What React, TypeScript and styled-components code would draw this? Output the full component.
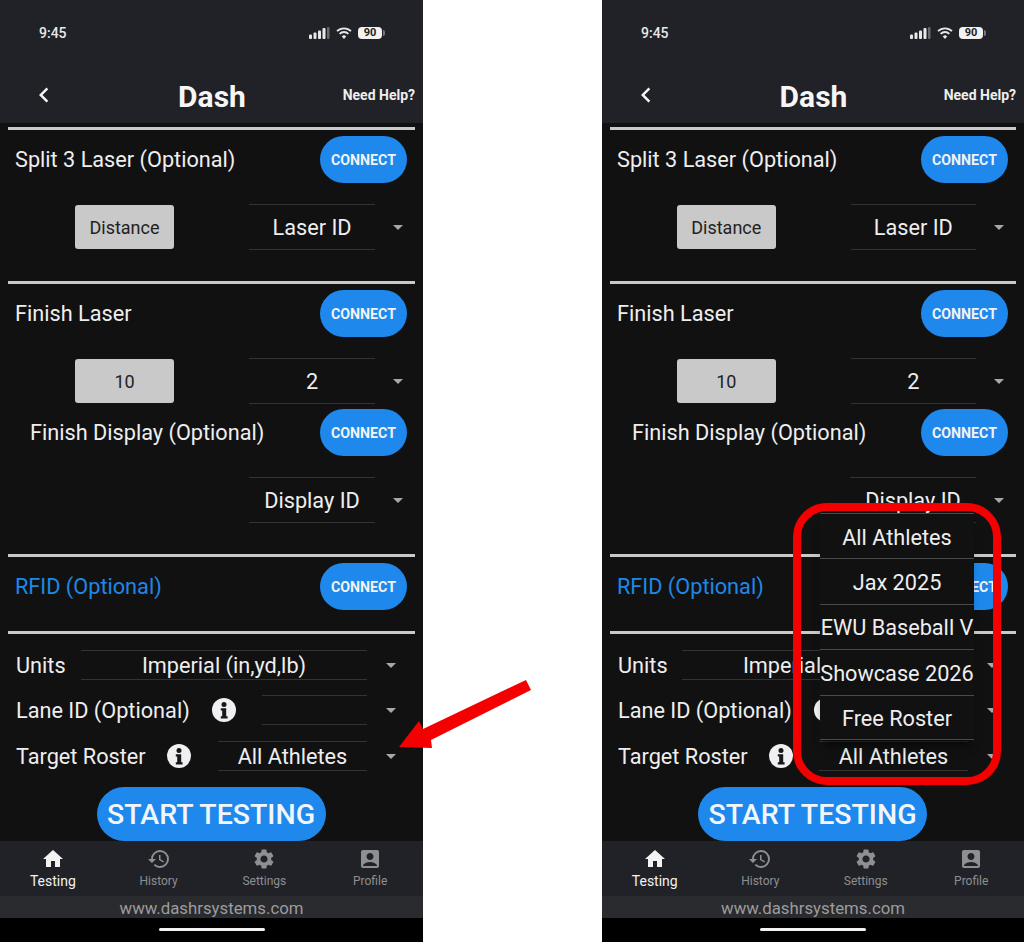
import React from "react";
import styled, { createGlobalStyle } from "styled-components";
import { MdAccountBox, MdChevronLeft, MdHistory, MdHome, MdSettings } from "react-icons/md";

const Global = createGlobalStyle`
  html, body { margin: 0; padding: 0; background: #fff; }
  * { box-sizing: border-box; }
  body { font-family: Roboto, "Liberation Sans", sans-serif; }
`;

const Page = styled.div`
  position: relative;
  width: 1024px;
  height: 942px;
  display: flex;
  justify-content: space-between;
  background: #fff;
  overflow: hidden;
`;

const Phone = styled.div<{ $width: number }>`
  position: relative;
  width: ${(p) => p.$width}px;
  height: 942px;
  display: flex;
  flex-direction: column;
  background: #111112;
  color: #eee;
  overflow: hidden;
`;

const Top = styled.header`
  height: 123px;
  background: #212227;
  display: flex;
  flex-direction: column;
`;

const StatusBar = styled.div`
  height: 66px;
  padding: 24px 41px 0 39px;
  display: flex;
  align-items: flex-start;
  justify-content: space-between;
`;

const Clock = styled.span`
  font-size: 14px;
  font-weight: 500;
  line-height: 18px;
  color: #e8e8e8;
`;

const StatusIcons = styled.div`
  display: flex;
  align-items: center;
  height: 18px;
  gap: 6px;
`;

const Battery = styled.div`
  position: relative;
  width: 24px;
  height: 12px;
  border-radius: 4px;
  background: #f2f2f2;
  color: #222;
  font-size: 11px;
  font-weight: 700;
  line-height: 12px;
  text-align: center;
  &::after {
    content: "";
    position: absolute;
    right: -3px;
    top: 3px;
    width: 2px;
    height: 6px;
    border-radius: 0 2px 2px 0;
    background: #777;
  }
`;

const TitleBar = styled.div`
  display: grid;
  grid-template-columns: 1fr auto 1fr;
  align-items: center;
  height: 57px;
  padding: 0 8px 0 29px;
`;

const Back = styled.div`
  display: flex;
  color: #f4f4f4;
`;

const Title = styled.h1`
  margin: 0;
  padding-top: 4px;
  font-size: 30px;
  font-weight: 700;
  color: #f6f6f6;
  transform: translateX(-10px);
`;

const Help = styled.div`
  font-size: 14px;
  font-weight: 700;
  color: #eee;
  text-align: right;
  white-space: nowrap;
`;

const Content = styled.main`
  flex: 1;
  padding: 0 8px;
  display: flex;
  flex-direction: column;
`;

const Divider = styled.div<{ $top: number }>`
  height: 3px;
  margin-top: ${(p) => p.$top}px;
  background: #c9c9c9;
`;

const TitleRow = styled.div<{ $top: number; $indent: number }>`
  display: flex;
  align-items: center;
  justify-content: space-between;
  height: 47px;
  margin-top: ${(p) => p.$top}px;
  padding-left: ${(p) => p.$indent}px;
  padding-right: 8px;
`;

const SectionLabel = styled.span<{ $accent?: boolean }>`
  font-size: 21.7px;
  color: ${(p) => (p.$accent ? "#1e88e5" : "#eeeeee")};
`;

const Connect = styled.button`
  width: 87px;
  height: 47px;
  border: 0;
  padding: 0;
  border-radius: 24px;
  background: #1e88ed;
  color: #f2f2f2;
  font-family: inherit;
  font-size: 14.2px;
  font-weight: 700;
`;

const ControlRow = styled.div<{ $top: number }>`
  display: flex;
  align-items: center;
  height: 46px;
  margin-top: ${(p) => p.$top}px;
`;

const ValueButton = styled.div`
  width: 99px;
  height: 44px;
  margin-left: 67px;
  padding-top: 1px;
  border-radius: 3px;
  background: #c9c9c9;
  color: #222;
  font-size: 18px;
  display: flex;
  align-items: center;
  justify-content: center;
`;

const Field = styled.div<{ $width: number; $left?: number }>`
  width: ${(p) => p.$width}px;
  height: 100%;
  margin-left: ${(p) => (p.$left === undefined ? "auto" : `${p.$left}px`)};
  padding-top: 1px;
  border-top: 1.5px solid #333336;
  border-bottom: 1.5px solid #333336;
  display: flex;
  align-items: center;
  justify-content: center;
  font-size: 21.7px;
  color: #eeeeee;
  white-space: nowrap;
`;

const Caret = styled.span<{ $left: number; $right: number }>`
  width: 0;
  height: 0;
  margin-left: ${(p) => p.$left}px;
  margin-right: ${(p) => p.$right}px;
  border-left: 5px solid transparent;
  border-right: 5px solid transparent;
  border-top: 5px solid #a8a8a8;
`;

const SettingRow = styled.div<{ $top: number }>`
  display: flex;
  align-items: center;
  height: 30px;
  margin-top: ${(p) => p.$top}px;
  padding-left: 8px;
`;

const SettingLabel = styled.span`
  padding-top: 1px;
  font-size: 21.7px;
  color: #eeeeee;
  white-space: nowrap;
`;

const Info = styled.svg<{ $left: number }>`
  flex: none;
  margin-left: ${(p) => p.$left}px;
`;

const Start = styled.button`
  align-self: center;
  width: 229px;
  height: 54px;
  margin-top: 16px;
  margin-right: 1px;
  border: 0;
  padding: 0;
  border-radius: 27px;
  background: #1e88ed;
  color: #f2f6fa;
  font-family: inherit;
  font-size: 28.5px;
  font-weight: 500;
`;

const Nav = styled.nav`
  height: 56px;
  display: grid;
  grid-template-columns: repeat(4, 1fr);
  background: #212227;
`;

const NavItem = styled.div<{ $active?: boolean }>`
  display: flex;
  flex-direction: column;
  align-items: center;
  padding-top: 6px;
  color: ${(p) => (p.$active ? "#f2f2f2" : "#8e8f92")};
  font-size: ${(p) => (p.$active ? 14 : 12)}px;
  font-weight: 400;
  line-height: 16px;
  gap: 2px;
`;

const Site = styled.div`
  height: 22px;
  background: #2a2b2e;
  color: #9c9c9e;
  font-size: 16.8px;
  line-height: 25px;
  text-align: center;
`;

const HomeArea = styled.div`
  height: 24px;
  background: #000;
  display: flex;
  justify-content: center;
  padding-top: 10px;
`;

const HomeBar = styled.div`
  width: 106px;
  height: 3px;
  border-radius: 2px;
  background: #f2f2f2;
`;

const Dropdown = styled.ul`
  position: absolute;
  left: 218px;
  top: 513px;
  width: 154px;
  margin: 0;
  padding: 0;
  list-style: none;
  background: #111112;
  box-shadow: 0 10px 8px -4px rgba(0, 0, 0, 0.5);
`;

const Option = styled.li`
  height: 45.4px;
  padding-top: 2px;
  border-top: 1.5px solid #4a4a4c;
  display: flex;
  align-items: center;
  justify-content: center;
  font-size: 21.7px;
  color: #eeeeee;
  white-space: nowrap;
  &:last-child {
    border-bottom: 1.5px solid #4a4a4c;
  }
`;

const Highlight = styled.div`
  position: absolute;
  left: 191px;
  top: 503px;
  width: 208px;
  height: 282px;
  border: 8px solid #f40000;
  border-radius: 34px;
`;

const ArrowMark = styled.svg`
  position: absolute;
  left: 390px;
  top: 670px;
`;

const StatusGlyphs = () => (
  <>
    <svg width="21" height="12" viewBox="0 0 21 12" aria-hidden="true">
      <rect x="0" y="7.5" width="3" height="4.5" rx="1" fill="#e8e8e8" />
      <rect x="4.5" y="5.5" width="3" height="6.5" rx="1" fill="#e8e8e8" />
      <rect x="9" y="3.5" width="3" height="8.5" rx="1" fill="#e8e8e8" />
      <rect x="13.5" y="1" width="3" height="11" rx="1" fill="#e8e8e8" />
      <rect x="18" y="0" width="2.5" height="12" rx="1" fill="#6a6a6a" />
    </svg>
    <svg width="16" height="12" viewBox="0 0 16 12" aria-hidden="true">
      <path d="M1 4.2a10 10 0 0 1 14 0" fill="none" stroke="#e8e8e8" strokeWidth="1.8" />
      <path d="M3.6 6.8a6.3 6.3 0 0 1 8.8 0" fill="none" stroke="#e8e8e8" strokeWidth="1.8" />
      <path d="M8 12 5.8 9.4a3.2 3.2 0 0 1 4.4 0Z" fill="#e8e8e8" />
    </svg>
  </>
);

const InfoIcon = ({ left }: { left: number }) => (
  <Info $left={left} width="24" height="24" viewBox="0 0 24 24" aria-hidden="true">
    <circle cx="12" cy="12" r="12" fill="#f0f0f2" />
    <circle cx="12" cy="6.6" r="2.5" fill="#17171a" />
    <path d="M8.8 10.2h5.4v8h1.4v2.2H8.8v-2.2h1.4v-5.8H8.8Z" fill="#17171a" />
  </Info>
);

const Select = ({ label, width, left, caretLeft, caretRight }: {
  label: string; width: number; left?: number; caretLeft: number; caretRight: number;
}) => (
  <>
    <Field $width={width} $left={left}>{label}</Field>
    <Caret $left={caretLeft} $right={caretRight} />
  </>
);

const Section = ({ top, indent, label, accent }: { top: number; indent: number; label: string; accent?: boolean }) => (
  <TitleRow $top={top} $indent={indent}>
    <SectionLabel $accent={accent}>{label}</SectionLabel>
    <Connect>CONNECT</Connect>
  </TitleRow>
);

const tabs = [
  { label: "Testing", Icon: MdHome, active: true },
  { label: "History", Icon: MdHistory },
  { label: "Settings", Icon: MdSettings },
  { label: "Profile", Icon: MdAccountBox },
];

const options = ["All Athletes", "Jax 2025", "EWU Baseball V", "Showcase 2026", "Free Roster"];

const Screen = ({ width, open }: { width: number; open?: boolean }) => (
  <Phone $width={width}>
    <Top>
      <StatusBar>
        <Clock>9:45</Clock>
        <StatusIcons>
          <StatusGlyphs />
          <Battery>90</Battery>
        </StatusIcons>
      </StatusBar>
      <TitleBar>
        <Back><MdChevronLeft size={30} /></Back>
        <Title>Dash</Title>
        <Help>Need Help?</Help>
      </TitleBar>
    </Top>
    <Content>
      <Divider $top={4} />
      <Section top={6} indent={7} label="Split 3 Laser (Optional)" />
      <ControlRow $top={21}>
        <ValueButton>Distance</ValueButton>
        <Select label="Laser ID" width={126} left={75} caretLeft={18} caretRight={12} />
      </ControlRow>
      <Divider $top={31} />
      <Section top={6} indent={7} label="Finish Laser" />
      <ControlRow $top={21}>
        <ValueButton>10</ValueButton>
        <Select label="2" width={126} left={75} caretLeft={18} caretRight={12} />
      </ControlRow>
      <Section top={5} indent={22} label="Finish Display (Optional)" />
      <ControlRow $top={21}>
        <Select label="Display ID" width={126} caretLeft={18} caretRight={12} />
      </ControlRow>
      <Divider $top={31} />
      <Section top={6} indent={7} label="RFID (Optional)" accent />
      <Divider $top={21} />
      <SettingRow $top={16}>
        <SettingLabel>Units</SettingLabel>
        <Select label="Imperial (in,yd,lb)" width={286} caretLeft={19} caretRight={19} />
      </SettingRow>
      <SettingRow $top={15}>
        <SettingLabel>Lane ID (Optional)</SettingLabel>
        <InfoIcon left={22} />
        <Select label="" width={105} caretLeft={19} caretRight={19} />
      </SettingRow>
      <SettingRow $top={16}>
        <SettingLabel>Target Roster</SettingLabel>
        <InfoIcon left={21} />
        <Select label="All Athletes" width={149} caretLeft={19} caretRight={19} />
      </SettingRow>
      <Start>START TESTING</Start>
    </Content>
    <Nav>
      {tabs.map(({ label, Icon, active }) => (
        <NavItem key={label} $active={active}>
          <Icon size={24} />
          {label}
        </NavItem>
      ))}
    </Nav>
    <Site>www.dashrsystems.com</Site>
    <HomeArea><HomeBar /></HomeArea>
    {open && (
      <>
        <Dropdown>
          {options.map((o) => <Option key={o}>{o}</Option>)}
        </Dropdown>
        <Highlight />
      </>
    )}
  </Phone>
);

export default function App() {
  return (
    <Page>
      <Global />
      <Screen width={423} />
      <Screen width={422} open />
      <ArrowMark width="145" height="85" viewBox="390 670 145 85" aria-hidden="true">
        <polygon points="399,747 419,721 423,729 526,680 531,690 431,740 432,748" fill="#f40000" />
      </ArrowMark>
    </Page>
  );
}
